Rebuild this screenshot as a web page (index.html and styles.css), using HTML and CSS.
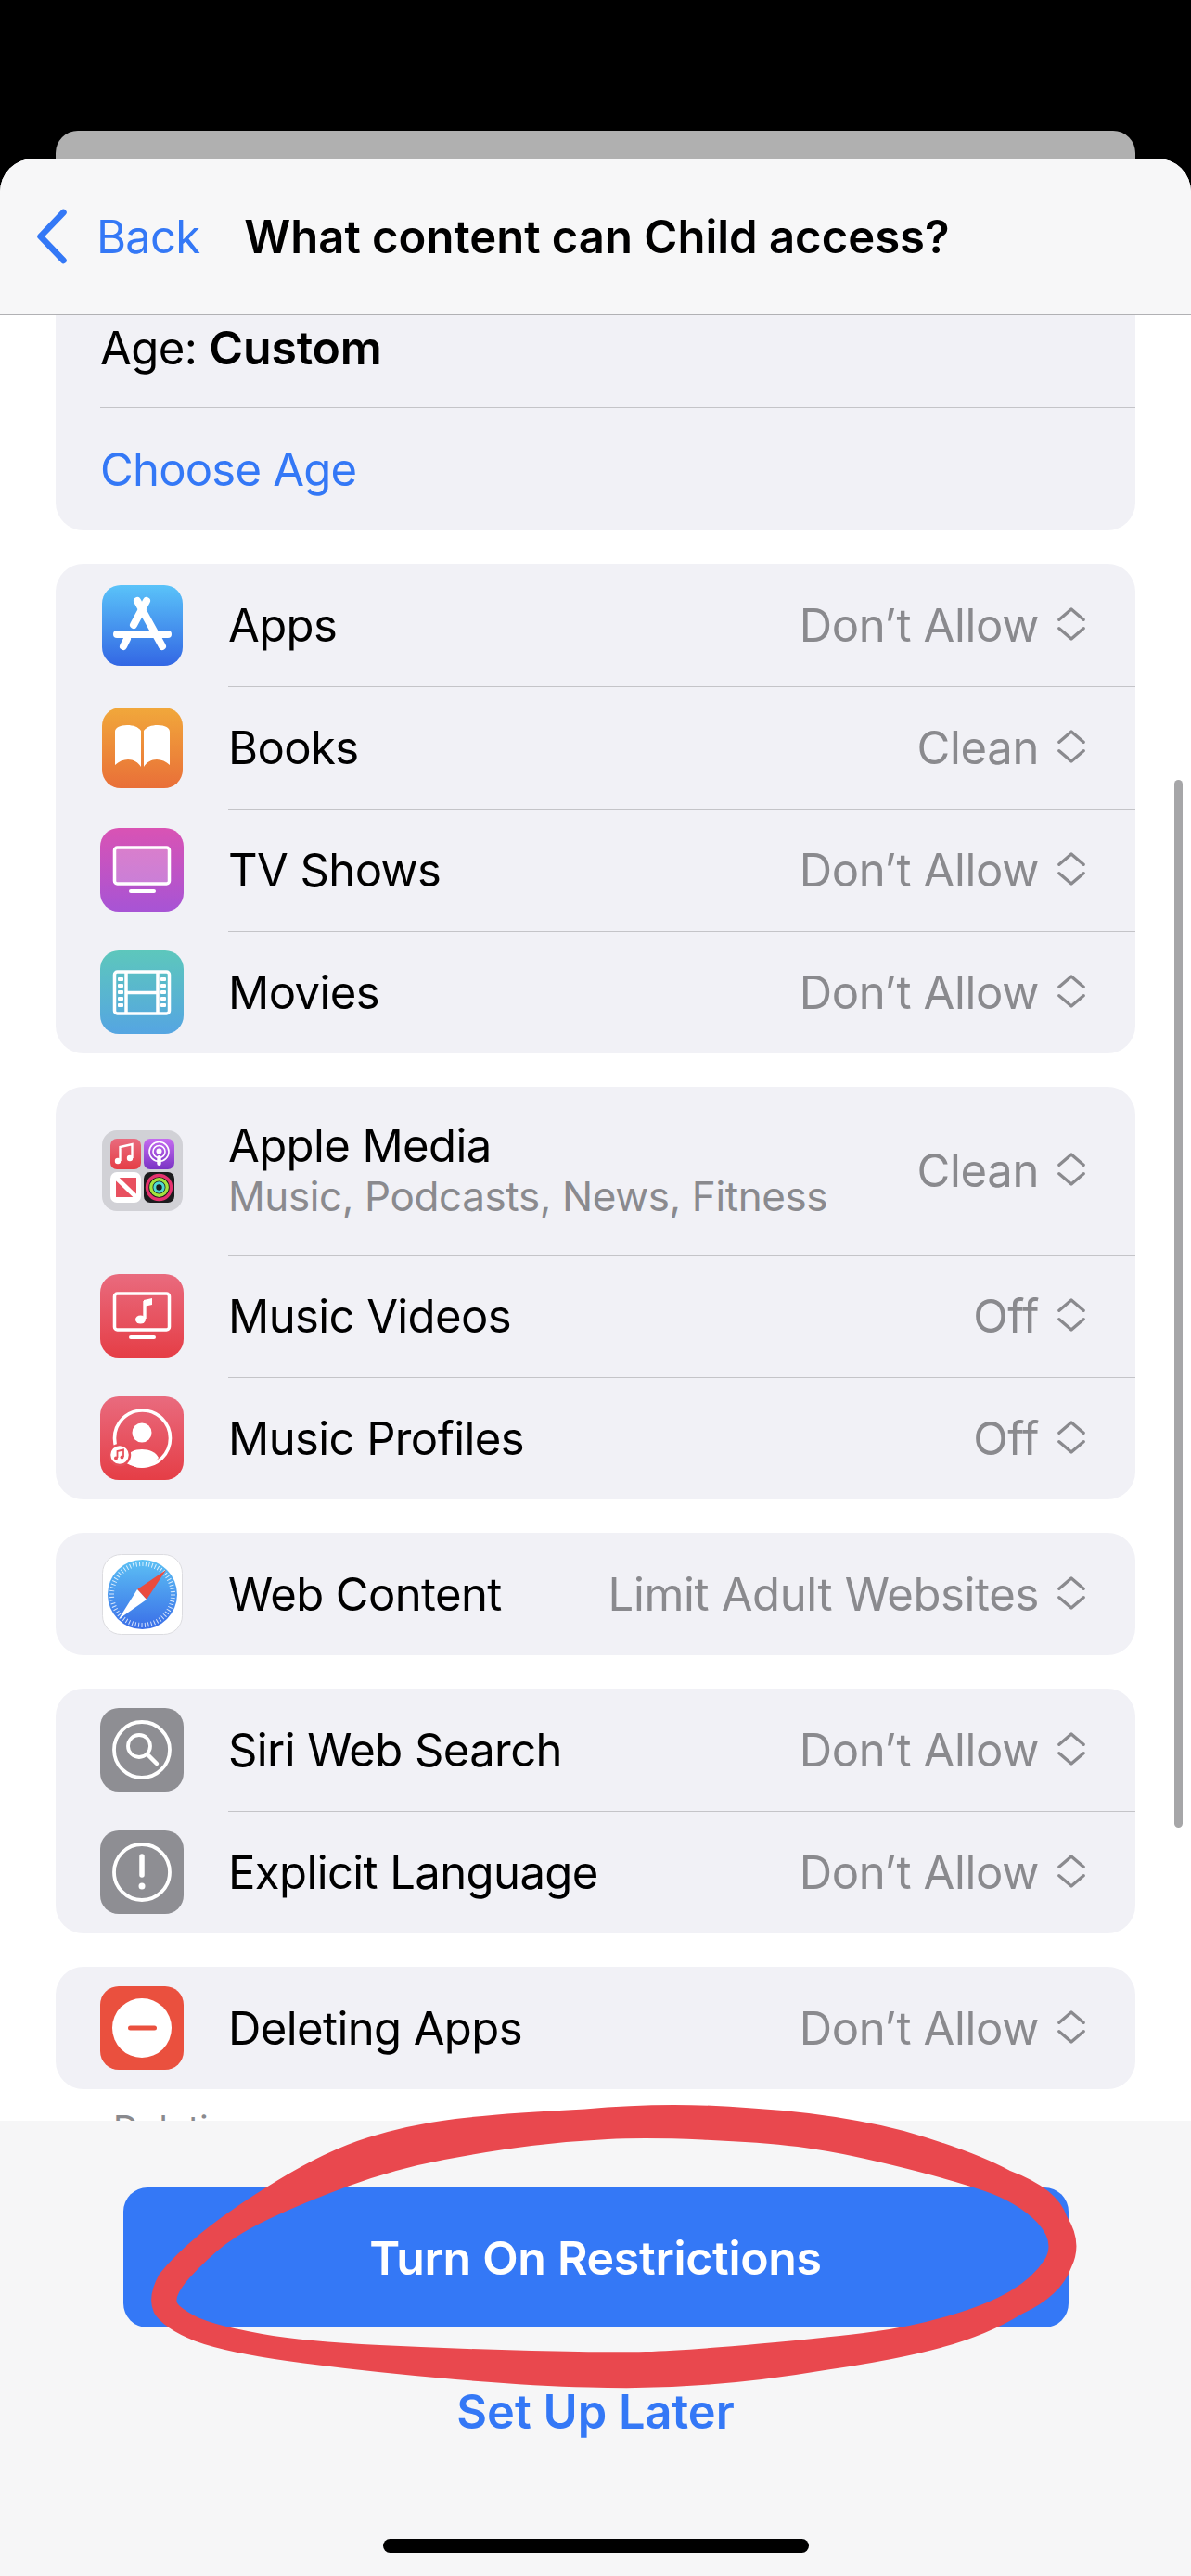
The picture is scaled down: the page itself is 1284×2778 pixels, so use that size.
FILE: index.html
```html
<!DOCTYPE html>
<html lang="en">
<head>
<meta charset="utf-8">
<title>What content can Child access?</title>
<link rel="stylesheet" href="styles.css">
</head>
<body>
<svg class="defs" width="0" height="0" aria-hidden="true">
  <defs>
    <symbol id="ud" viewBox="0 0 32 38"><path d="M2 14 16 2l14 12M2 24l14 12 14-12" fill="none" stroke="#8a8a8e" stroke-width="3.6" stroke-linecap="round" stroke-linejoin="round"/></symbol>
    <linearGradient id="gApps" x1="0" y1="0" x2="0" y2="1"><stop offset="0" stop-color="#5ac3f9"/><stop offset="1" stop-color="#3367e4"/></linearGradient>
    <linearGradient id="gBooks" x1="0" y1="0" x2="0" y2="1"><stop offset="0" stop-color="#f1a83b"/><stop offset="1" stop-color="#e96f38"/></linearGradient>
    <linearGradient id="gTv" x1="0" y1="0" x2="0" y2="1"><stop offset="0" stop-color="#d953b4"/><stop offset="1" stop-color="#a754d5"/></linearGradient>
    <linearGradient id="gMov" x1="0" y1="0" x2="0" y2="1"><stop offset="0" stop-color="#5dc7bc"/><stop offset="1" stop-color="#55a5e2"/></linearGradient>
    <linearGradient id="gRed" x1="0" y1="0" x2="0" y2="1"><stop offset="0" stop-color="#e96b7e"/><stop offset="1" stop-color="#e53e46"/></linearGradient>
    <linearGradient id="gPod" x1="0" y1="0" x2="0" y2="1"><stop offset="0" stop-color="#c56bf0"/><stop offset="1" stop-color="#7a34c4"/></linearGradient>
    <linearGradient id="gSaf" x1="0" y1="0" x2="0" y2="1"><stop offset="0" stop-color="#5cc0f4"/><stop offset="1" stop-color="#3a6ee8"/></linearGradient>
  </defs>
</svg>
<div class="phone">
  <div class="sheet-back"></div>
  <div class="sheet">
    <header class="nav">
      <svg class="nav-chevron" viewBox="0 0 34 58"><path d="M29 4 5 29l24 25" fill="none" stroke="#3478f6" stroke-width="6.5" stroke-linecap="round" stroke-linejoin="round"/></svg>
      <span class="nav-back">Back</span>
      <span class="nav-title">What content can Child access?</span>
    </header>
    <main class="scroll">
      <section class="card card-age">
        <div class="age-row"><div class="row-text">Age: <b>Custom</b></div></div>
        <div class="age-link">Choose Age</div>
      </section>

      <section class="card">
        <div class="row">
          <svg class="ico ico-narrow" viewBox="0 0 87 87"><rect width="87" height="87" rx="20" fill="url(#gApps)"/><g stroke="#fff" stroke-width="8" stroke-linecap="round" fill="none"><path d="M16 53h55"/><path d="M38 17l27 49"/><path d="M48 17 34 43"/><path d="M27 58l-4 8"/></g></svg>
          <span class="label">Apps</span><span class="value">Don’t Allow</span>
          <svg class="ud"><use href="#ud"/></svg>
        </div>
        <div class="row">
          <svg class="ico ico-narrow" viewBox="0 0 87 87"><rect width="87" height="87" rx="20" fill="url(#gBooks)"/><path fill="#fff" d="M14 26c0-4 5-7 13-7 7 0 12 2 15 6v39c-3-5-8-8-14-8-5 0-10 2-14 6zM73 26c0-4-5-7-13-7-7 0-12 2-15 6v39c3-5 8-8 14-8 5 0 10 2 14 6z"/></svg>
          <span class="label">Books</span><span class="value">Clean</span>
          <svg class="ud"><use href="#ud"/></svg>
        </div>
        <div class="row">
          <svg class="ico" viewBox="0 0 90 90"><rect width="90" height="90" rx="20" fill="url(#gTv)"/><rect x="15.5" y="21" width="59" height="39" rx="3" fill="#fff" fill-opacity=".25" stroke="#fff" stroke-width="3.5"/><rect x="31" y="66" width="29" height="4" rx="2" fill="#fff"/></svg>
          <span class="label">TV Shows</span><span class="value">Don’t Allow</span>
          <svg class="ud"><use href="#ud"/></svg>
        </div>
        <div class="row">
          <svg class="ico" viewBox="0 0 90 90"><rect width="90" height="90" rx="20" fill="url(#gMov)"/><rect x="15.5" y="23" width="59" height="45" rx="3" fill="none" stroke="#fff" stroke-width="3.5"/><path d="M28 23v45M62 23v45M28 45.500h34" stroke="#fff" stroke-width="3.500"/><g fill="#fff"><rect x="19" y="29" width="6" height="4" rx="1"/><rect x="19" y="36" width="6" height="4" rx="1"/><rect x="19" y="43" width="6" height="4" rx="1"/><rect x="19" y="50" width="6" height="4" rx="1"/><rect x="19" y="57" width="6" height="4" rx="1"/><rect x="65" y="29" width="6" height="4" rx="1"/><rect x="65" y="36" width="6" height="4" rx="1"/><rect x="65" y="43" width="6" height="4" rx="1"/><rect x="65" y="50" width="6" height="4" rx="1"/><rect x="65" y="57" width="6" height="4" rx="1"/></g></svg>
          <span class="label">Movies</span><span class="value">Don’t Allow</span>
          <svg class="ud"><use href="#ud"/></svg>
        </div>
      </section>

      <section class="card">
        <div class="row row-tall">
          <svg class="ico ico-narrow" viewBox="0 0 87 87">
            <rect width="87" height="87" rx="16" fill="#d1d1d6"/>
            <rect x="9" y="9" width="33" height="33" rx="7" fill="url(#gRed)"/>
            <path d="M19.500 33V18l13-3v15" fill="none" stroke="#fff" stroke-width="2.400"/><circle cx="17" cy="33" r="3.200" fill="#fff"/><circle cx="30" cy="30" r="3.200" fill="#fff"/>
            <rect x="45" y="9" width="33" height="33" rx="7" fill="url(#gPod)"/>
            <circle cx="61.500" cy="23" r="10.500" fill="none" stroke="#fff" stroke-width="1.600"/><circle cx="61.500" cy="23" r="6.500" fill="none" stroke="#fff" stroke-width="1.600"/><circle cx="61.500" cy="22.500" r="3" fill="#fff"/><rect x="59.300" y="27" width="4.400" height="11" rx="2.200" fill="#fff"/>
            <rect x="9" y="45" width="33" height="33" rx="7" fill="#fff"/>
            <path d="M15 51h22v21H15z" fill="#e8505f"/><path d="M13 49l26 25" stroke="#fff" stroke-width="5"/>
            <rect x="45" y="45" width="33" height="33" rx="7" fill="#1c1c1e"/>
            <circle cx="61.500" cy="61.500" r="13" fill="none" stroke="#e5326f" stroke-width="3.400"/><circle cx="61.500" cy="61.500" r="8.700" fill="none" stroke="#a4e33d" stroke-width="3.400"/><circle cx="61.500" cy="61.500" r="4.700" fill="none" stroke="#4fd9d3" stroke-width="3"/>
          </svg>
          <div class="label-stack"><span class="label">Apple Media</span><span class="sub">Music, Podcasts, News, Fitness</span></div>
          <span class="value">Clean</span>
          <svg class="ud"><use href="#ud"/></svg>
        </div>
        <div class="row">
          <svg class="ico" viewBox="0 0 90 90"><rect width="90" height="90" rx="20" fill="url(#gRed)"/><rect x="15.500" y="21" width="59" height="39" rx="3" fill="none" stroke="#fff" stroke-width="3.500"/><rect x="31" y="66" width="29" height="4" rx="2" fill="#fff"/><path d="M48 29v19" stroke="#fff" stroke-width="3.400"/><path d="M47 28l9-2v7l-9 2z" fill="#fff"/><ellipse cx="43.500" cy="49" rx="5.500" ry="4.500" fill="#fff"/></svg>
          <span class="label">Music Videos</span><span class="value">Off</span>
          <svg class="ud"><use href="#ud"/></svg>
        </div>
        <div class="row">
          <svg class="ico" viewBox="0 0 90 90"><rect width="90" height="90" rx="20" fill="url(#gRed)"/><circle cx="45.500" cy="45" r="30" fill="none" stroke="#fff" stroke-width="3.600"/><circle cx="45" cy="39" r="10.500" fill="#fff"/><path d="M27 67c3-7 10-10 18-10s15 3 18 9c-5 7-11 11-18 11s-13-3-18-10z" fill="#fff"/><circle cx="21" cy="63" r="11" fill="#fff" stroke="#e6505a" stroke-width="2.500"/><path d="M18.500 66v-7l6.500-1.500V65" fill="none" stroke="#e6505a" stroke-width="1.800"/><circle cx="17" cy="66.500" r="2" fill="#e6505a"/><circle cx="23.500" cy="65.500" r="2" fill="#e6505a"/></svg>
          <span class="label">Music Profiles</span><span class="value">Off</span>
          <svg class="ud"><use href="#ud"/></svg>
        </div>
      </section>

      <section class="card">
        <div class="row">
          <svg class="ico ico-narrow" viewBox="0 0 87 87">
            <rect x=".5" y=".5" width="86" height="86" rx="20" fill="#fff" stroke="#dcdce0"/>
            <circle cx="43.500" cy="43.500" r="37.500" fill="url(#gSaf)"/>
            <circle cx="43.500" cy="43.500" r="33" fill="none" stroke="#fff" stroke-opacity=".8" stroke-width="5" stroke-dasharray="1 2.450"/>
            <path d="M69 17 38 38l10 11z" fill="#ea4c3f"/>
            <path d="M18 70 38 38l10 11z" fill="#fff"/>
          </svg>
          <span class="label">Web Content</span><span class="value">Limit Adult Websites</span>
          <svg class="ud"><use href="#ud"/></svg>
        </div>
      </section>

      <section class="card">
        <div class="row">
          <svg class="ico" viewBox="0 0 90 90"><rect width="90" height="90" rx="20" fill="#8e8e93"/><circle cx="45" cy="45" r="30" fill="none" stroke="#fff" stroke-width="3.800"/><circle cx="42" cy="41" r="12" fill="none" stroke="#fff" stroke-width="3.800"/><path d="M51 50l10 10" stroke="#fff" stroke-width="4.500" stroke-linecap="round"/></svg>
          <span class="label">Siri Web Search</span><span class="value">Don’t Allow</span>
          <svg class="ud"><use href="#ud"/></svg>
        </div>
        <div class="row">
          <svg class="ico" viewBox="0 0 90 90"><rect width="90" height="90" rx="20" fill="#8e8e93"/><circle cx="45" cy="45" r="30" fill="none" stroke="#fff" stroke-width="3.800"/><path d="M45 28v20" stroke="#fff" stroke-width="5.500" stroke-linecap="round"/><circle cx="45" cy="60" r="3.500" fill="#fff"/></svg>
          <span class="label">Explicit Language</span><span class="value">Don’t Allow</span>
          <svg class="ud"><use href="#ud"/></svg>
        </div>
      </section>

      <section class="card">
        <div class="row">
          <svg class="ico" viewBox="0 0 90 90"><rect width="90" height="90" rx="20" fill="#ea503e"/><circle cx="45" cy="45" r="32" fill="#fff"/><rect x="30" y="42.500" width="31" height="5" rx="2.500" fill="#ea503e"/></svg>
          <span class="label">Deleting Apps</span><span class="value">Don’t Allow</span>
          <svg class="ud"><use href="#ud"/></svg>
        </div>
      </section>

      <p class="footnote">Deleting</p>
    </main>
    <footer class="footer">
      <div class="primary">Turn On Restrictions</div>
      <div class="secondary">Set Up Later</div>
      <div class="home"></div>
    </footer>
  </div>
  <div class="scrollbar"></div>
  <svg class="scribble" viewBox="0 0 1284 2778" aria-hidden="true">
    <path fill="#e9484e" fill-rule="evenodd" d="M491 2285Q540 2279 630.500 2274.500Q721 2266 811 2273.500Q901 2279 974.500 2298Q1048 2319 1089 2341Q1140 2360 1150 2390Q1168 2418 1155 2445Q1144 2476 1101.500 2495.500Q1065 2518 1015.500 2531.500Q966 2545 892.500 2555.500Q819 2568 757.500 2572Q696 2577 634.500 2574.500Q573 2573 491 2566Q409 2559 327.500 2548.500Q246 2538 210 2524.500Q176 2511 166 2494Q158 2477 172 2452Q188 2432 217 2408Q246 2384 299 2351.500Q352 2319 397 2305Q442 2291 491 2285ZM655 2307Q696 2305 757.500 2307.500Q819 2310 860 2315Q901 2320 962.500 2335Q1024 2350 1060.500 2362.500Q1097 2375 1118 2396.500Q1138 2418 1126 2437Q1114 2456 1089.500 2470.500Q1065 2485 1024 2497Q983 2509 942 2514.500Q901 2520 819 2527.500Q737 2535 696 2536Q655 2537 573 2535Q491 2533 409.500 2529Q328 2525 282.500 2517Q237 2509 214 2499.500Q195 2490 191 2483.500Q188 2477 200 2461.500Q213 2446 233.500 2428Q254 2410 291 2392.500Q328 2375 377 2357Q426 2339 479 2329Q532 2319 573 2314Q614 2309 655 2307Z"/>
  </svg>
</div>
</body>
</html>
```

FILE: styles.css
```css
* { box-sizing: border-box; }
html, body { margin: 0; padding: 0; background: #000; }
body { font-family: Inter, "Liberation Sans", sans-serif; color: #000; }
.defs { position: absolute; }

.phone {
  position: relative;
  width: 1284px;
  height: 2778px;
  padding-top: 141px;
  overflow: hidden;
  background: #000;
  display: flex;
  flex-direction: column;
}
.sheet-back {
  height: 30px;
  margin: 0 60px;
  background: #b0b0b0;
  border-radius: 24px 24px 0 0;
  flex: none;
}
.sheet {
  flex: 1;
  min-height: 0;
  display: flex;
  flex-direction: column;
  background: #fff;
  border-radius: 36px 36px 0 0;
  overflow: hidden;
}

.nav {
  flex: none;
  height: 169px;
  display: flex;
  align-items: center;
  padding: 0 0 0 38px;
  background: #f7f7f8;
  border-bottom: 1.500px solid #b1b1b4;
  position: relative;
  z-index: 1;
}
.nav-chevron { width: 36px; height: 60px; flex: none; }
.nav-back { margin-left: 30px; font-size: 49px; letter-spacing: -.8px; color: #3478f6; }
.nav-title { margin-left: 48px; font-size: 49px; font-weight: 600; white-space: nowrap; }

.scroll {
  flex: 1;
  min-height: 0;
  overflow: hidden;
  padding: 0 60px;
  display: flex;
  flex-direction: column;
  gap: 36px;
}
.card {
  flex: none;
  background: #f1f1f6;
  border-radius: 30px;
  padding-left: 48px;
}
.card-age { margin-top: -32px; }

.age-row {
  height: 132px;
  padding-top: 3px;
  display: flex;
  align-items: center;
  border-bottom: 1.500px solid #c4c4c8;
}
.row-text { font-size: 49px; letter-spacing: -.6px; }
.row-text b { font-weight: 600; font-size: 50px; letter-spacing: -.2px; }
.age-link { height: 132px; display: flex; align-items: center; font-size: 49px; letter-spacing: -.8px; color: #3478f6; }

.row {
  height: 132px;
  display: flex;
  align-items: center;
  padding-right: 54px;
  position: relative;
}
.row-tall { height: 181px; }
.row + .row::before {
  content: "";
  position: absolute;
  top: 0;
  left: 138px;
  right: 0;
  border-top: 1.500px solid #c4c4c8;
}
.ico { width: 90px; height: 90px; flex: none; }
.ico-narrow { width: 87px; height: 87px; margin: 0 1.500px; }

.label { margin-left: 48px; font-size: 49px; letter-spacing: -.6px; white-space: nowrap; }
.label-stack { display: flex; flex-direction: column; align-items: flex-start; margin-top: 1px; }
.label-stack .label { line-height: 54px; }
.sub { margin-left: 48px; font-size: 44px; letter-spacing: -.4px; line-height: 54px; color: #8a8a8e; white-space: nowrap; }
.value { margin-left: auto; font-size: 49px; letter-spacing: -.35px; color: #8a8a8e; white-space: nowrap; }
.ud { width: 30px; height: 36px; flex: none; margin: -3px 0 0 20px; }

.footnote { margin: -17px 0 0 62px; font-size: 38px; line-height: 46px; color: #8a8a8e; flex: none; }

.footer {
  flex: none;
  height: 491px;
  background: #f6f6f7;
  display: flex;
  flex-direction: column;
  align-items: center;
  padding-top: 72px;
  position: relative;
}
.primary {
  width: 1019px;
  height: 151px;
  border-radius: 26px;
  background: #3478f6;
  color: #fff;
  font-size: 50px;
  font-weight: 600;
  letter-spacing: -.3px;
  display: flex;
  align-items: center;
  justify-content: center;
}
.secondary { margin-top: 61px; font-size: 50.5px; font-weight: 600; color: #3478f6; line-height: 60px; }
.home { width: 459px; height: 15px; border-radius: 8px; background: #000; margin-top: 107px; }

.scrollbar {
  position: absolute;
  left: 1266px;
  top: 841px;
  width: 9px;
  height: 1130px;
  border-radius: 5px;
  background: #a6a6a8;
}
.scribble { position: absolute; left: 0; top: 0; width: 1284px; height: 2778px; pointer-events: none; }
```
